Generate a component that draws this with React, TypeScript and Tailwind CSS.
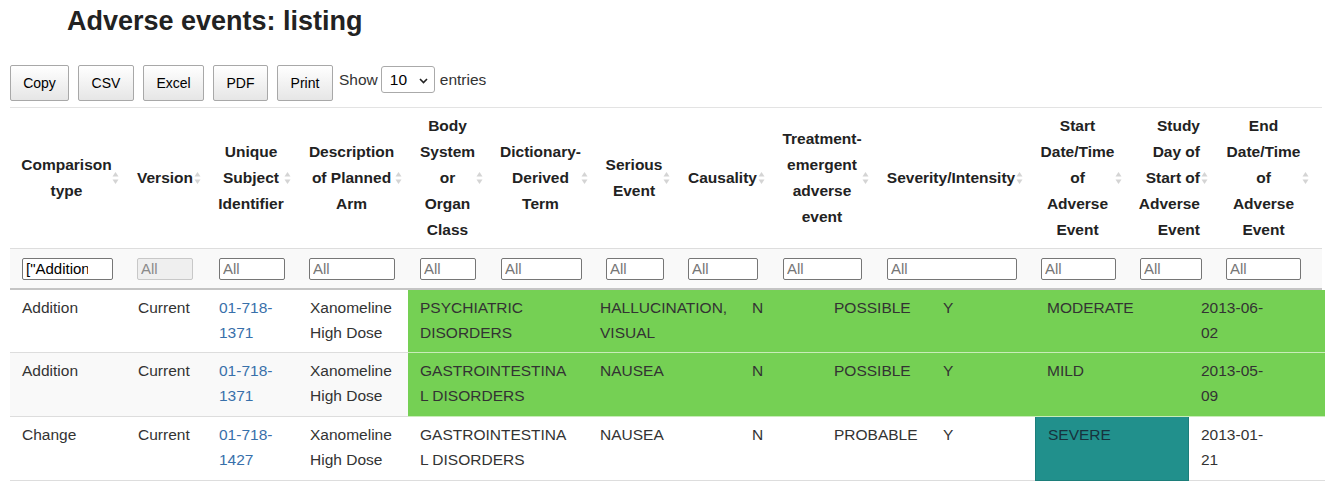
import React from "react";

type Col = { label: string[]; right?: boolean };

const headerCols: Col[] = [
  { label: ["Comparison", "type"] },
  { label: ["Version"] },
  { label: ["Unique", "Subject", "Identifier"] },
  { label: ["Description", "of Planned", "Arm"] },
  { label: ["Body", "System", "or", "Organ", "Class"] },
  { label: ["Dictionary-", "Derived", "Term"] },
  { label: ["Serious", "Event"] },
  { label: ["Causality"] },
  { label: ["Treatment-", "emergent", "adverse", "event"] },
  { label: ["Severity/Intensity"] },
  { label: ["Start", "Date/Time", "of", "Adverse", "Event"] },
  { label: ["Study", "Day of", "Start of", "Adverse", "Event"], right: true },
  { label: ["End", "Date/Time", "of", "Adverse", "Event"] },
];

const filterWidths = [
  "w-[91px]", "w-[56px]", "w-[66px]", "w-[86px]", "w-[56px]", "w-[81px]", "w-[58px]",
  "w-[70px]", "w-[79px]", "w-[130px]", "w-[75px]", "w-[62px]", "w-[75px]",
];

type Row = {
  cells: string[][];
  fill: "green" | "teal" | "none";
  striped: boolean;
  height: string;
};

const rows: Row[] = [
  {
    cells: [
      ["Addition"], ["Current"], ["01-718-", "1371"], ["Xanomeline", "High Dose"],
      ["PSYCHIATRIC", "DISORDERS"], ["HALLUCINATION,", "VISUAL"], ["N"], ["POSSIBLE"], ["Y"],
      ["MODERATE"], ["2013-06-", "02"],
    ],
    fill: "green",
    striped: false,
    height: "h-[63px]",
  },
  {
    cells: [
      ["Addition"], ["Current"], ["01-718-", "1371"], ["Xanomeline", "High Dose"],
      ["GASTROINTESTINA", "L DISORDERS"], ["NAUSEA"], ["N"], ["POSSIBLE"], ["Y"],
      ["MILD"], ["2013-05-", "09"],
    ],
    fill: "green",
    striped: true,
    height: "h-[64px]",
  },
  {
    cells: [
      ["Change"], ["Current"], ["01-718-", "1427"], ["Xanomeline", "High Dose"],
      ["GASTROINTESTINA", "L DISORDERS"], ["NAUSEA"], ["N"], ["PROBABLE"], ["Y"],
      ["SEVERE"], ["2013-01-", "21"],
    ],
    fill: "teal",
    striped: false,
    height: "h-[64px]",
  },
];

function SortIcon() {
  return (
    <svg width="7" height="14" viewBox="0 0 7 14" className="absolute right-[6px] top-1/2 -translate-y-1/2">
      <polygon points="3.5,1 0.5,5.5 6.5,5.5" fill="#d4d4d4" />
      <polygon points="0.5,8.5 6.5,8.5 3.5,13" fill="#d4d4d4" />
    </svg>
  );
}

function ToolButton({ label, width }: { label: string; width: string }) {
  return (
    <button
      className={`${width} h-[36px] rounded-[2px] border border-[#a8a8a8] bg-gradient-to-b from-white to-[#e6e6e6] text-[14px] text-black`}
    >
      {label}
    </button>
  );
}

function cellClass(row: Row, col: number) {
  if (row.fill === "green" && col >= 4) return "bg-[#75d054] border-[#c9ecb9]";
  if (row.fill === "teal" && col === 9) return "bg-[#21908c] border-[#1c7e7a] border-x text-[#17323d]";
  if (row.striped) return "bg-[#f9f9f9] border-[#dddddd]";
  return "bg-white border-[#dddddd]";
}

export default function App() {
  return (
    <div className="w-[1325px] h-[485px] overflow-hidden bg-white font-['Liberation_Sans',Arial,sans-serif] text-[#333]">
      <h1 className="pl-[67px] pt-[5px] text-[27px] leading-[32px] font-bold text-[#222]">
        Adverse events: listing
      </h1>

      <div className="mt-[28px] flex items-start pl-[10px]">
        <div className="flex gap-[9px]">
          <ToolButton label="Copy" width="w-[59px]" />
          <ToolButton label="CSV" width="w-[56px]" />
          <ToolButton label="Excel" width="w-[61px]" />
          <ToolButton label="PDF" width="w-[55px]" />
          <ToolButton label="Print" width="w-[56px]" />
        </div>
        <div className="ml-[6px] mt-[1px] flex items-center text-[15.5px] text-[#333]">
          <span>Show</span>
          <div className="relative ml-[3px] flex h-[27px] w-[54px] items-center rounded-[3px] border border-[#aaaaaa] bg-white pl-[8px] text-[15.5px] text-black">
            10
            <svg width="9" height="6" viewBox="0 0 9 6" className="absolute right-[6px] top-[11px]">
              <path d="M1 1 L4.5 4.5 L8 1" fill="none" stroke="#222" strokeWidth="1.6" />
            </svg>
          </div>
          <span className="ml-[5px]">entries</span>
        </div>
      </div>

      <div className="mt-[6px] ml-[10px] w-[1312px] border-t border-[#e3e3e3]">
        <div className="grid h-[140px] grid-cols-[115px_82px_90px_111px_81px_105px_82px_95px_104px_154px_99px_86px_101px]">
          {headerCols.map((c, i) => (
            <div
              key={i}
              className={`relative flex flex-col justify-center pl-[12px] pr-[14px] text-[15.5px] leading-[26px] font-bold text-[#222] whitespace-nowrap ${
                c.right ? "items-end" : "items-center"
              }`}
            >
              {c.label.map((l, j) => (
                <span key={j}>{l}</span>
              ))}
              <SortIcon />
            </div>
          ))}
        </div>
        <div className="grid h-[42px] grid-cols-[115px_82px_90px_111px_81px_105px_82px_95px_104px_154px_99px_86px_101px] items-start border-t border-b-2 border-t-[#dddddd] border-b-[#c4c4c4] bg-[#f9f9f9] pt-[8px]">
          {filterWidths.map((w, i) => (
            <div key={i} className="pl-[12px]">
              {i === 0 ? (
                <input
                  readOnly
                  value={'["Addition"]'}
                  className={`${w} h-[22px] rounded-[2px] border border-[#767676] bg-white pl-[3px] pr-[24px] text-[15px] text-black outline-none`}
                />
              ) : i === 1 ? (
                <input
                  disabled
                  placeholder="All"
                  className={`${w} h-[22px] rounded-[2px] border border-[#c8c8c8] bg-[#efefef] pl-[3px] text-[15px] placeholder:text-[#8a8a8a] outline-none`}
                />
              ) : (
                <input
                  readOnly
                  placeholder="All"
                  className={`${w} h-[22px] rounded-[2px] border border-[#767676] bg-white pl-[3px] text-[15px] placeholder:text-[#767676] outline-none`}
                />
              )}
            </div>
          ))}
        </div>
      </div>

      <div className="ml-[10px] w-[1315px]">
        {rows.map((r, ri) => (
          <div
            key={ri}
            className={`grid ${r.height} grid-cols-[116px_81px_91px_110px_180px_152px_82px_109px_104px_154px_1fr]`}
          >
            {r.cells.map((lines, ci) => (
              <div
                key={ci}
                className={`border-b pl-[12px] pt-[5px] text-[15.5px] leading-[25px] whitespace-nowrap ${cellClass(r, ci)} ${
                  ci === 2 ? "text-[#3870aa]" : ""
                }`}
              >
                {lines.map((l, li) => (
                  <div key={li}>{l}</div>
                ))}
              </div>
            ))}
          </div>
        ))}
      </div>
    </div>
  );
}
